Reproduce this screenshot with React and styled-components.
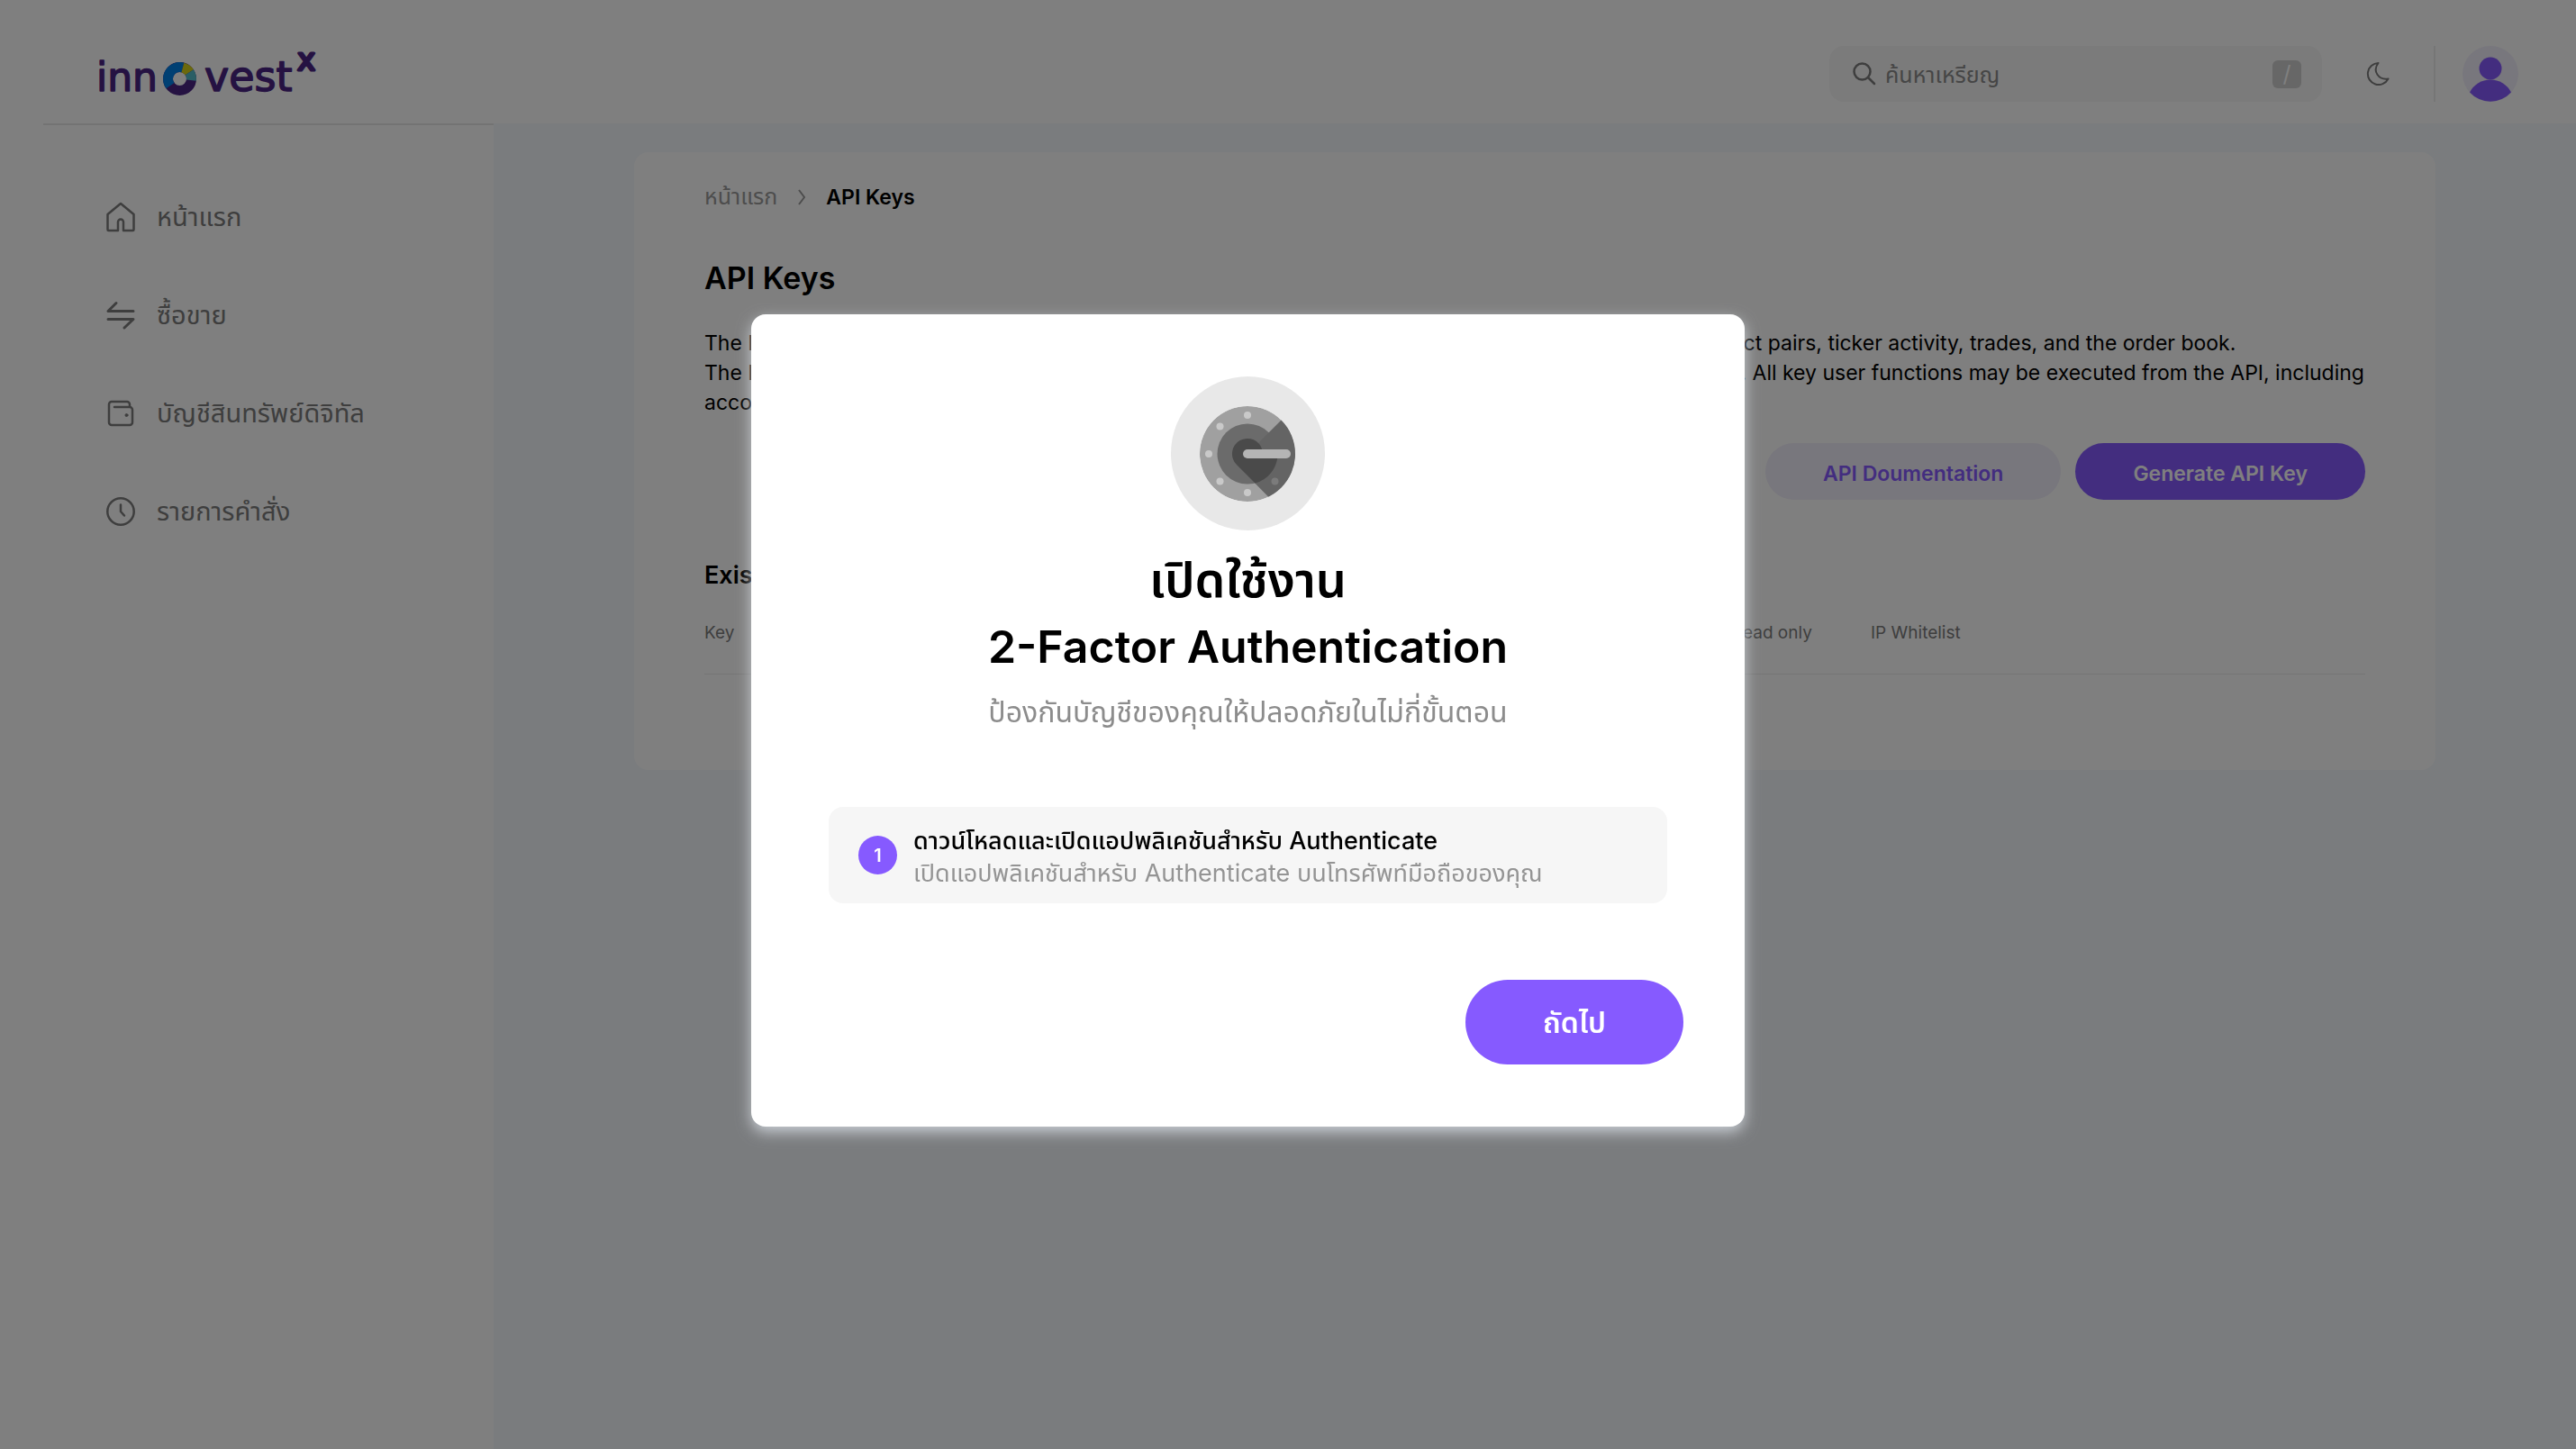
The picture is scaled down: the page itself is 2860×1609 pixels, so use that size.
import React from "react";
import styled, { createGlobalStyle, css } from "styled-components";

const purple = "#865aff";
const muted = "#7d7d7d";

const GlobalStyle = createGlobalStyle`
  *, *::before, *::after { box-sizing: border-box; }
  html, body, #root { height: 100%; }
  body {
    margin: 0;
    background: #f5f8fd;
    color: #000;
    font-family: Inter, "Noto Sans Thai", "Noto Sans", sans-serif;
    font-size: 22px;
  }
  button, input { font: inherit; }
  h1, h2, p, ul, ol { margin: 0; padding: 0; }
  ul, ol { list-style: none; }
  a { color: inherit; text-decoration: none; }
`;

const Page = styled.div`
  min-height: 100%;
  display: flex;
  flex-direction: column;
`;

const Header = styled.header`
  height: 137px;
  padding: 0 64px 0 108px;
  display: flex;
  align-items: flex-start;
  justify-content: space-between;
  background: #fff;
`;

const HomeLink = styled.a`
  display: block;
  padding-top: 40px;
  svg { display: block; }
`;

const Tools = styled.div`
  display: flex;
  align-items: center;
  padding-top: 51px;
`;

const Search = styled.label`
  width: 547px;
  height: 62px;
  padding: 0 23px 0 26px;
  display: flex;
  align-items: center;
  gap: 10px;
  border-radius: 16px;
  background: #f6f6f6;
  color: ${muted};
`;

const SearchInput = styled.input`
  flex: 1;
  min-width: 0;
  border: 0;
  padding: 2px 0 0;
  outline: 0;
  background: none;
  font-size: 25px;
  &::placeholder { color: #8c8c8c; opacity: 1; }
`;

const Shortcut = styled.kbd`
  width: 32px;
  height: 31px;
  display: grid;
  place-items: center;
  border-radius: 6px;
  background: #cecece;
  color: #fff;
  font: 25px/31px Inter, sans-serif;
`;

const IconButton = styled.button`
  display: grid;
  place-items: center;
  border: 0;
  padding: 0;
  background: none;
  color: ${muted};
`;

const ThemeButton = styled(IconButton)`
  width: 126px;
  height: 62px;
  border-right: 2px solid #ececec;
`;

const AvatarButton = styled(IconButton)`
  margin-left: 30px;
`;

const Body = styled.div`
  flex: 1;
  display: flex;
`;

const Sidebar = styled.nav`
  flex: 0 0 548px;
  padding-left: 48px;
  background: #fff;
`;

const NavList = styled.ul`
  padding: 69px 0 0 70px;
  border-top: 2px solid #e6e6e6;
  display: grid;
  gap: 46px;
`;

const NavLink = styled.a`
  height: 63px;
  padding-top: 2px;
  display: flex;
  align-items: center;
  gap: 24px;
  color: ${muted};
  font-size: 29px;
  line-height: 40px;
  svg { flex: none; }
`;

const Main = styled.main`
  flex: 1;
  min-width: 0;
  padding: 32px 156px;
`;

const Card = styled.section`
  max-width: 2000px;
  margin: 0 auto;
  padding: 32px 78px 106px;
  border-radius: 16px;
  background: #fff;
`;

const Breadcrumb = styled.ol`
  display: flex;
  align-items: center;
  height: 36px;
  gap: 22px;
  color: #9a9a9a;
  font-size: 25px;
  svg { display: block; }
`;

const Current = styled.li`
  color: #000;
  font-size: 23px;
  font-weight: 600;
`;

const PageTitle = styled.h1`
  margin-top: 47px;
  font-size: 34px;
  line-height: 50px;
  font-weight: 600;
`;

const Description = styled.p`
  margin-top: 31px;
  font-size: 23px;
  line-height: 33px;
  white-space: nowrap;
`;

const Actions = styled.div`
  margin-top: 28px;
  display: flex;
  justify-content: flex-end;
  gap: 16px;
`;

const Pill = styled.button`
  height: 63px;
  padding: 4px 64px 0;
  border: 0;
  border-radius: 32px;
  font-size: 23px;
  font-weight: 600;
  white-space: nowrap;
  background: ${(p) => (p.$primary ? purple : "#f1eefa")};
  color: ${(p) => (p.$primary ? "#fff" : purple)};
`;

const SectionTitle = styled.h2`
  margin-top: 66px;
  font-size: 27px;
  line-height: 36px;
  font-weight: 600;
`;

const KeyTable = styled.table`
  width: 100%;
  margin-top: 32px;
  border-collapse: collapse;
  table-layout: fixed;
`;

const HeadCell = styled.th`
  width: ${(p) => p.$width};
  height: 59px;
  padding: 0;
  border-bottom: 1px solid #ececec;
  text-align: left;
  vertical-align: top;
  font-size: 19px;
  line-height: 28px;
  font-weight: 400;
  color: ${muted};
`;

const Backdrop = styled.div`
  position: fixed;
  inset: 0;
  padding: 0 89px 9px 0;
  display: grid;
  place-items: center;
  background: rgba(0, 0, 0, 0.5);
`;

const Dialog = styled.section`
  width: 1103px;
  padding: 69px 68px;
  display: flex;
  flex-direction: column;
  align-items: center;
  border-radius: 16px;
  background: #fff;
  box-shadow: 0 6px 16px rgba(232, 240, 246, 0.7);
`;

const DialogTitle = styled.h2`
  margin-top: 18px;
  font-size: 50px;
  line-height: 74px;
  font-weight: 600;
  text-align: center;
`;

const TitleLine = styled.span`
  display: block;
  height: 74px;
  font-size: ${(p) => (p.$large ? "54px" : "50px")};
`;

const DialogLead = styled.p`
  margin-top: 14px;
  font-size: 32px;
  line-height: 44px;
  color: #8c8c8c;
`;

const Steps = styled.ol`
  align-self: stretch;
  margin: 83px 18px 0;
`;

const Step = styled.li`
  height: 107px;
  padding: 0 33px;
  display: flex;
  align-items: center;
  gap: 18px;
  border-radius: 16px;
  background: #f6f6f6;
`;

const StepNumber = styled.span`
  flex: none;
  width: 43px;
  height: 43px;
  display: grid;
  place-items: center;
  border-radius: 50%;
  background: ${purple};
  color: #fff;
  font-size: 20px;
  font-weight: 600;
`;

const StepBody = styled.div`
  padding-top: 4px;
`;

const StepText = styled.p`
  font-size: 27px;
  line-height: 36px;
  white-space: nowrap;
  ${(p) => (p.$strong ? css`font-weight: 500; color: #000;` : css`color: #949494;`)}
`;

const NextButton = styled.button`
  align-self: flex-end;
  width: 242px;
  height: 94px;
  margin-top: 85px;
  padding: 4px 0 0;
  border: 0;
  border-radius: 47px;
  background: ${purple};
  color: #fff;
  font-size: 32px;
  font-weight: 600;
`;

const Logo = () => (
  <svg width="250" height="80" viewBox="108 40 250 80" role="img" aria-label="innovestx">
    <g fill="#4b2585" stroke="#4b2585" strokeWidth="1.500" strokeLinejoin="round" fontFamily="DejaVu Sans, sans-serif" fontSize="44">
      <text x="107" y="101">inn</text>
      <text x="227" y="101" fontSize="46">vest</text>
      <text x="330" y="78" fontSize="34" strokeWidth="3">x</text>
    </g>
    <g fill="none" strokeWidth="11" transform="translate(199.500 87.500)">
      <circle r="13" stroke="#4b2585" />
      <path d="M-10.500 7.600A13 13 0 0 1 3.400-12.500" stroke="#0080e6" />
      <path d="M3.400-12.500A13 13 0 0 1 10.800-7.200" stroke="#d6d31a" />
      <path d="M10.800-7.200A13 13 0 0 1 12.900 1.600" stroke="#55bccb" />
    </g>
  </svg>
);

const Line = ({ children, width = 2.5 }) => (
  <svg width="32" height="34" viewBox="0 0 32 34" fill="none" stroke="currentColor" strokeWidth={width} strokeLinecap="round" strokeLinejoin="round" aria-hidden="true">
    {children}
  </svg>
);

const HomeIcon = () => (
  <Line>
    <path d="M16 2 1.500 14v17q0 1 1 1H13V22.500a3 3 0 0 1 6 0V32h10.500q1 0 1-1V14Z" />
  </Line>
);
const TradeIcon = () => (
  <Line width={3}>
    <path d="M30 12.500H2L11 3.500M2 21.500h28L20 31" />
  </Line>
);
const WalletIcon = () => (
  <Line>
    <path d="M9 10h17a3 3 0 0 1 3 3v14a3 3 0 0 1-3 3H6a3 3 0 0 1-3-3V7a3 3 0 0 1 3-3h17a3 3 0 0 1 3 3v3" />
    <circle cx="22.500" cy="19" r="1.500" fill="currentColor" strokeWidth="1" />
  </Line>
);
const ClockIcon = () => (
  <Line>
    <circle cx="16" cy="17" r="14.700" />
    <path d="M16 9.500V17l4 4.500" />
  </Line>
);
const SearchIcon = () => (
  <svg width="26" height="26" viewBox="0 0 26 26" fill="none" stroke="currentColor" strokeWidth="2.500" strokeLinecap="round" aria-hidden="true">
    <circle cx="10.500" cy="10.500" r="9" />
    <path d="m17 17 7 7" />
  </svg>
);
const MoonIcon = () => (
  <svg width="26" height="26" viewBox="0 0 26 26" fill="none" stroke="currentColor" strokeWidth="2" strokeLinejoin="round" aria-hidden="true">
    <path d="M13.500 1A12 12 0 1 0 24.500 18.500C14 20 6.500 10 13.500 1Z" />
  </svg>
);
const Avatar = () => (
  <svg width="62" height="62" viewBox="0 0 62 62" aria-hidden="true">
    <circle cx="31" cy="31" r="31" fill="#f1eefa" />
    <circle cx="31" cy="25" r="12.500" fill={purple} />
    <path d="M8 51.500a26 26 0 0 1 46 0 31 31 0 0 1-46 0Z" fill={purple} />
  </svg>
);
const Chevron = () => (
  <svg width="10" height="18" viewBox="0 0 10 18" fill="none" stroke="currentColor" strokeWidth="2" aria-hidden="true">
    <path d="m2 1 6 8-6 8" />
  </svg>
);
const Authenticator = () => (
  <svg width="171" height="171" viewBox="0 0 171 171" role="img" aria-label="Authenticator">
    <defs>
      <clipPath id="dial"><circle cx="85" cy="86" r="53" /></clipPath>
    </defs>
    <circle cx="85.500" cy="85.500" r="85.500" fill="#e8e8e8" />
    <g clipPath="url(#dial)">
      <circle cx="85" cy="86" r="53" fill="#a0a0a0" />
      <circle cx="85" cy="86" r="33.500" fill="#6b6b6b" />
      <path d="M108.500 62.500 123 48l27 12v80h-35.500L73 98l12-12Z" fill="#646464" />
      <path d="M73 98a17 17 0 1 1 28.500-16l17 4a33.500 33.500 0 0 1-25 32.500Z" fill="#4a4a4a" />
    </g>
    <g fill="#c9c9c9">
      <circle cx="85" cy="43" r="4" />
      <circle cx="54.500" cy="55.500" r="4" />
      <circle cx="42" cy="86" r="4" />
      <circle cx="54.500" cy="116.500" r="4" />
      <circle cx="85" cy="129" r="4" />
      <circle cx="115.500" cy="116.500" r="4" fill="#7b7b7b" />
      <rect x="80" y="81" width="53" height="10" rx="5" fill="#b5b5b5" />
    </g>
  </svg>
);

const navItems = [
  { label: "หน้าแรก", Icon: HomeIcon },
  { label: "ซื้อขาย", Icon: TradeIcon },
  { label: "บัญชีสินทรัพย์ดิจิทัล", Icon: WalletIcon },
  { label: "รายการคำสั่ง", Icon: ClockIcon },
];

const columns = [
  { label: "Key", width: "auto" },
  { label: "Read only", width: "154px" },
  { label: "IP Whitelist", width: "549px" },
];

export default function App() {
  return (
    <>
      <GlobalStyle />
      <Page>
        <Header>
          <HomeLink href="#"><Logo /></HomeLink>
          <Tools>
            <Search>
              <SearchIcon />
              <SearchInput type="search" placeholder="ค้นหาเหรียญ" aria-label="ค้นหาเหรียญ" />
              <Shortcut>/</Shortcut>
            </Search>
            <ThemeButton aria-label="Dark mode"><MoonIcon /></ThemeButton>
            <AvatarButton aria-label="Profile"><Avatar /></AvatarButton>
          </Tools>
        </Header>
        <Body>
          <Sidebar>
            <NavList>
              {navItems.map(({ label, Icon }) => (
                <li key={label}><NavLink href="#"><Icon />{label}</NavLink></li>
              ))}
            </NavList>
          </Sidebar>
          <Main>
            <Card>
              <Breadcrumb>
                <li><a href="#">หน้าแรก</a></li>
                <li><Chevron /></li>
                <Current>API Keys</Current>
              </Breadcrumb>
              <PageTitle>API Keys</PageTitle>
              <Description>
                The Public API is a REST interface that gives open access to market data without a key, with a list of product pairs, ticker activity, trades, and the order book.
                <br />
                The Private API needs a signed key and lets you trade with your own balances in a secure way at any time. All key user functions may be executed from the API, including
                <br />
                account balances, order placement and order history.
              </Description>
              <Actions>
                <Pill>API Doumentation</Pill>
                <Pill $primary>Generate API Key</Pill>
              </Actions>
              <SectionTitle>Existing API Keys</SectionTitle>
              <KeyTable>
                <thead>
                  <tr>
                    {columns.map((c) => (
                      <HeadCell key={c.label} $width={c.width} scope="col">{c.label}</HeadCell>
                    ))}
                  </tr>
                </thead>
              </KeyTable>
            </Card>
          </Main>
        </Body>
      </Page>
      <Backdrop>
        <Dialog role="dialog" aria-modal="true" aria-labelledby="dialog-title">
          <Authenticator />
          <DialogTitle id="dialog-title">
            <TitleLine $large>เปิดใช้งาน</TitleLine>
            <TitleLine>2-Factor Authentication</TitleLine>
          </DialogTitle>
          <DialogLead>ป้องกันบัญชีของคุณให้ปลอดภัยในไม่กี่ขั้นตอน</DialogLead>
          <Steps>
            <Step>
              <StepNumber>1</StepNumber>
              <StepBody>
                <StepText $strong>ดาวน์โหลดและเปิดแอปพลิเคชันสำหรับ Authenticate</StepText>
                <StepText>เปิดแอปพลิเคชันสำหรับ Authenticate บนโทรศัพท์มือถือของคุณ</StepText>
              </StepBody>
            </Step>
          </Steps>
          <NextButton>ถัดไป</NextButton>
        </Dialog>
      </Backdrop>
    </>
  );
}
